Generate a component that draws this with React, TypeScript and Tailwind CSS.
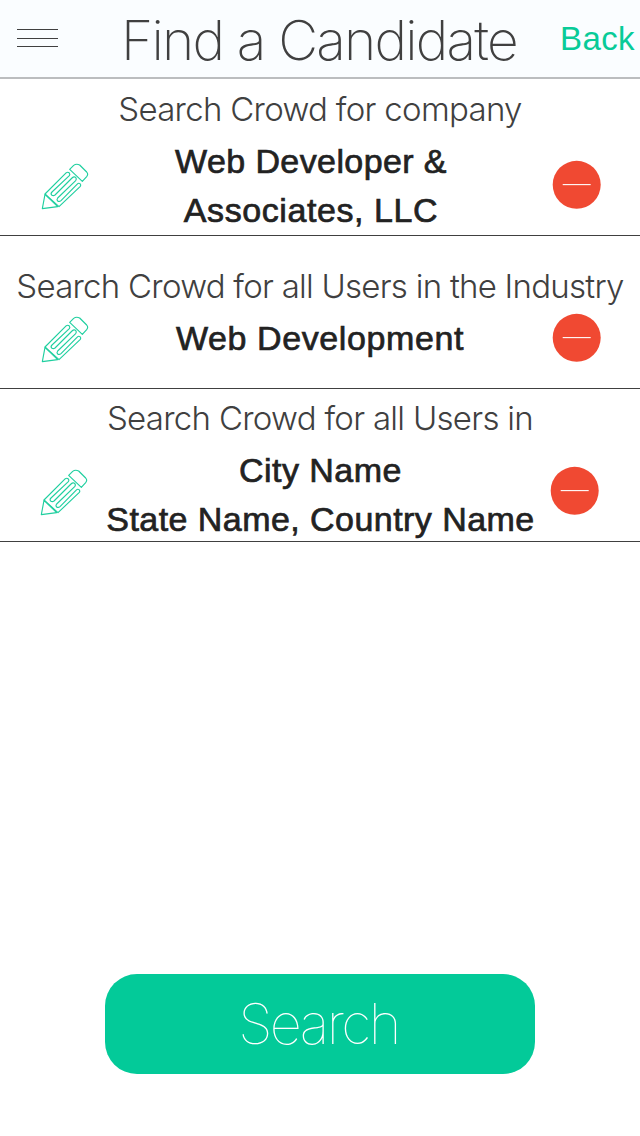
import type { ReactNode } from "react";

const light =
  "font-['Inter',sans-serif] whitespace-nowrap text-[#404040]";
const medium =
  "font-['Liberation_Sans',Arial,sans-serif] whitespace-nowrap text-center text-[34px] leading-[49px] text-[#222] [-webkit-text-stroke:0.7px_#222]";

function PencilIcon() {
  return (
    <svg
      width="48"
      height="47"
      viewBox="-3 -3 144 141"
      fill="none"
      stroke="#1fcf9f"
      strokeWidth="3.4"
      strokeLinejoin="round"
    >
      <path d="M83 16 L95 4 Q103 -2 113 3 L134 24 Q140 31 134 38 L121 52 Z" />
      <path d="M9 90 L73 26 Q78 23 82 27 Q85 31 82 35 L30 84 Q25 89 29 93 Q34 97 39 93 L90 42 Q96 36 101 40 Q105 45 101 50 L47 102 Q43 107 47 111 Q52 114 57 110 L105 61 Q110 56 114 59 Q118 63 115 67 L51 128 Z" />
      <path d="M9 91 L1 134 L47 128 Z" />
    </svg>
  );
}

function RemoveIcon() {
  return (
    <svg width="48" height="48" viewBox="0 0 48 48" className="overflow-visible">
      <circle cx="23.7" cy="23.8" r="24" fill="#f04932" />
      <path d="M9.7 23.6 H37.7" stroke="#fff" strokeWidth="1.1" />
    </svg>
  );
}

interface RowProps {
  title: ReactNode;
  titleTop: string;
  pad: string;
  children: ReactNode;
}

function Row({ title, titleTop, pad, children }: RowProps) {
  return (
    <section className="flex h-[153px] flex-col border-b border-[#404040]">
      <div className={`flex h-[72px] shrink-0 justify-center ${titleTop}`}>{title}</div>
      <div className={`flex h-[80px] justify-between pt-[6px] ${pad}`}>
        <button className="mt-[2px] h-[47px] w-[48px] shrink-0">
          <PencilIcon />
        </button>
        {children}
        <button className="h-[48px] w-[48px] shrink-0">
          <RemoveIcon />
        </button>
      </div>
    </section>
  );
}

export default function App() {
  return (
    <main className="flex h-[1136px] w-[640px] flex-col overflow-hidden bg-white">
      <header className="flex h-[79px] shrink-0 items-start border-b-2 border-[#bbbdbf] bg-[#fafdff] pl-[17px]">
        <button className="mt-[29px] flex h-[18px] w-[41px] flex-col justify-between">
          <span className="h-px w-full bg-[#404040]" />
          <span className="h-px w-full bg-[#404040]" />
          <span className="h-px w-full bg-[#404040]" />
        </button>
        <h1 className={`${light} mt-[5px] ml-[63px] w-[408px] text-[55px] leading-[70px] font-extralight tracking-[-1.8px]`}>
          Find a Candidate
        </h1>
        <a className="mt-[19px] ml-[31px] font-['Liberation_Sans',Arial,sans-serif] text-[33px] leading-[40px] tracking-[0.4px] whitespace-nowrap text-[#08cb98]">
          Back
        </a>
      </header>
      <div className="h-[4px] shrink-0" />
      <Row
        titleTop="pt-[6px]"
        pad="pl-[41px] pr-[39px]"
        title={<h2 className={`${light} text-[33px] leading-[40px] font-light tracking-[-0.7px]`}>Search Crowd for company</h2>}
      >
        <p className={`${medium} -mt-[24px] mr-[20px] tracking-[0.4px]`}>
          Web Developer &amp;
          <br />
          <span className="tracking-[0.58px]">Associates, LLC</span>
        </p>
      </Row>
      <Row
        titleTop="pt-[30px]"
        pad="pl-[41px] pr-[39px]"
        title={<h2 className={`${light} text-[33px] leading-[40px] font-light tracking-[-0.74px]`}>Search Crowd for all Users in the Industry</h2>}
      >
        <p className={`${medium} mr-[2px] tracking-[0.6px]`}>Web Development</p>
      </Row>
      <Row
        titleTop="pt-[9px]"
        pad="pl-[40px] pr-[41px]"
        title={<h2 className={`${light} text-[33px] leading-[40px] font-light tracking-[-0.7px]`}>Search Crowd for all Users in</h2>}
      >
        <p className={`${medium} -mt-[21px] -mr-[2px] tracking-[0.45px]`}>
          City Name
          <br />
          State Name, Country Name
        </p>
      </Row>
      <button className="mt-auto mb-[62px] ml-[105px] flex h-[100px] w-[430px] shrink-0 items-center justify-center rounded-[32px] bg-[#03ca99] pr-[3px]">
        <span className="font-['Inter',sans-serif] text-[56px] leading-[70px] font-thin tracking-[-2.6px] whitespace-nowrap text-white">
          Search
        </span>
      </button>
    </main>
  );
}
